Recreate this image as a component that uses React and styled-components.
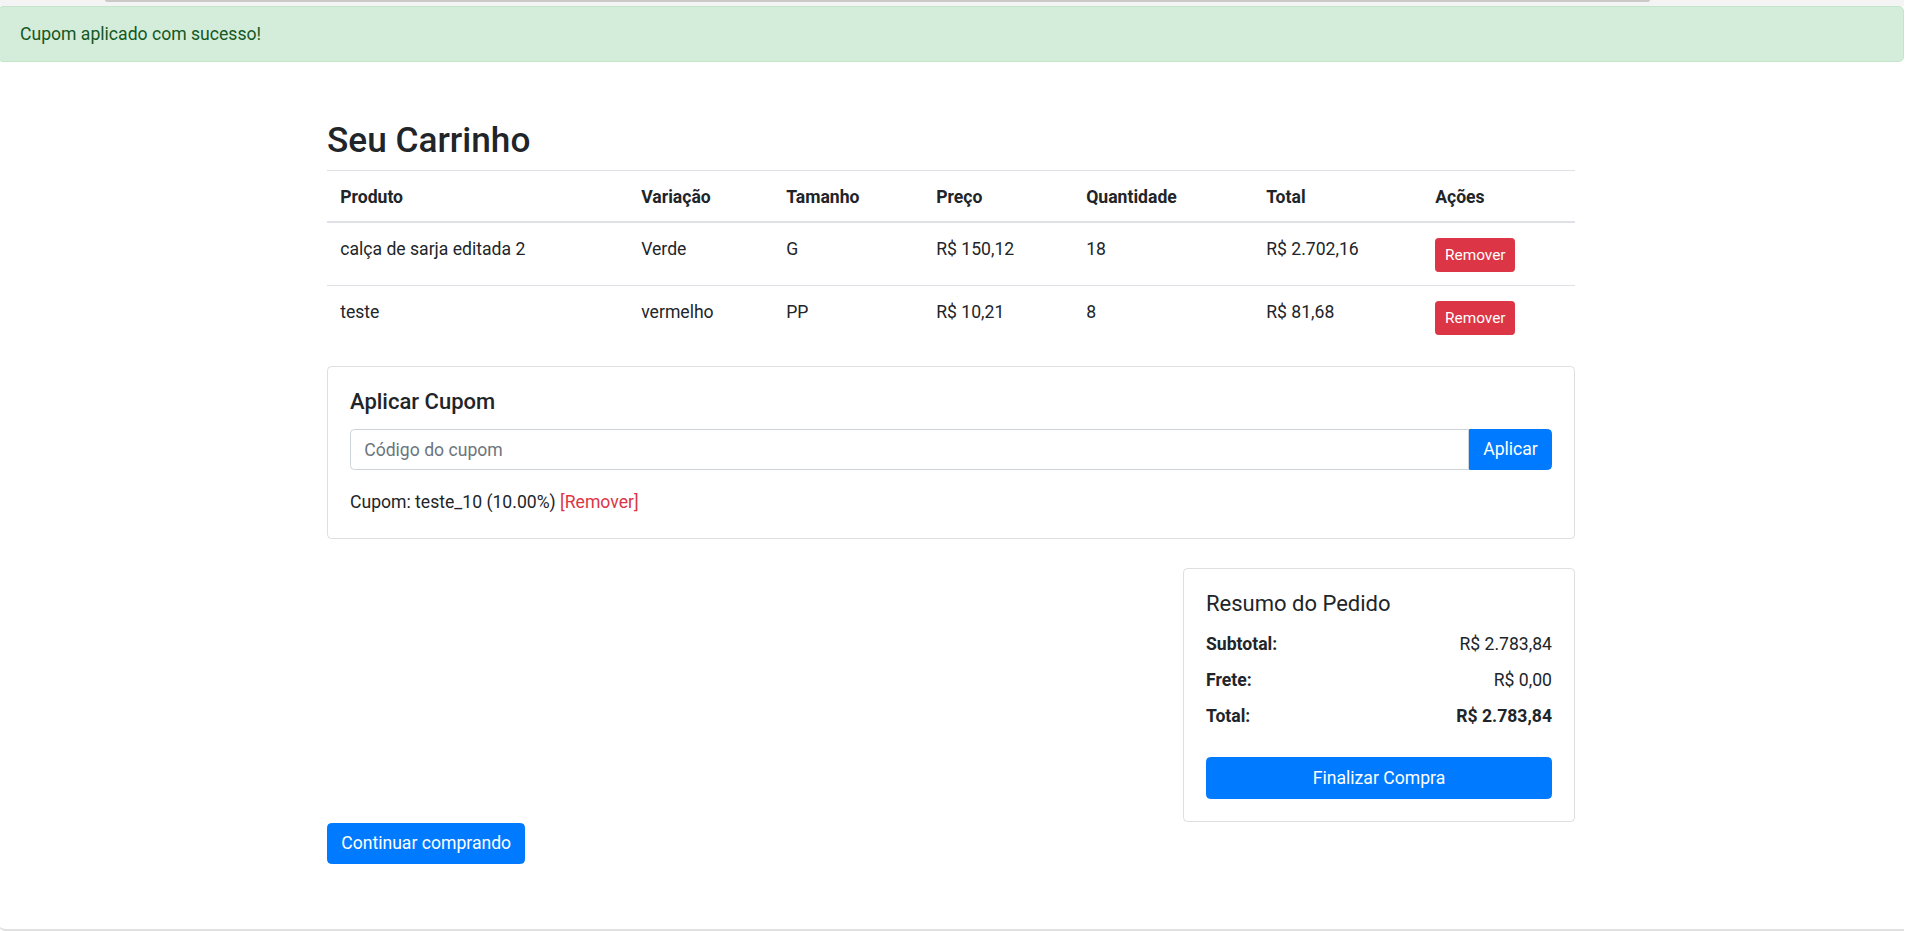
import React from "react";
import styled, { createGlobalStyle } from "styled-components";

const GlobalStyle = createGlobalStyle`
  * { box-sizing: border-box; }
  body {
    margin: 0;
    background: #ffffff;
    color: #212529;
    font-family: Roboto, "Noto Sans", "Liberation Sans", sans-serif;
    font-size: 17.6px;
    line-height: 1.5;
    overflow: hidden;
  }
`;

const Page = styled.div`
  margin: 0 2px 0 -2px;
  min-height: 931px;
  border-bottom: 2px solid #e0e0e0;
  border-bottom-left-radius: 8px;
`;

const TopStrip = styled.div`
  height: 6px;
  background: #f4f4f4;
  padding-left: 107px;
`;

const StripThumb = styled.div`
  width: 1545px;
  height: 2px;
  background: #c9c9c9;
  border-radius: 0 0 2px 2px;
`;

const Alert = styled.div`
  padding: 13.8px 21px;
  background: #d4edda;
  border: 1px solid #c3e6cb;
  border-radius: 5px;
  color: #155724;
  line-height: 26.4px;
`;

const Container = styled.main`
  width: 1248px;
  margin: 0 auto;
  padding-top: 56.5px;
  padding-bottom: 40px;
`;

const Title = styled.h2`
  margin: 0 0 8.8px;
  font-size: 35.2px;
  font-weight: 500;
  line-height: 1.2;
`;

const Table = styled.table`
  width: 100%;
  border-collapse: collapse;
  table-layout: fixed;
  margin-bottom: 17.6px;
`;

const Th = styled.th`
  width: ${({ w }) => w}px;
  padding: 13.2px 13.2px 10.8px;
  text-align: left;
  font-weight: 700;
  line-height: 26.4px;
  border-top: 1px solid #dee2e6;
  border-bottom: 2px solid #dee2e6;
`;

const Td = styled.td`
  padding: 13.2px;
  vertical-align: top;
  line-height: 26.4px;
  border-top: 1px solid #dee2e6;
`;

const SmallDanger = styled.button`
  display: inline-block;
  margin-top: 2px;
  padding: 4.4px 8.8px;
  font-family: inherit;
  font-size: 15.4px;
  line-height: 1.5;
  color: #fff;
  background: #dc3545;
  border: 1px solid #dc3545;
  border-radius: 3.3px;
  cursor: pointer;
`;

const Card = styled.section`
  border: 1px solid rgba(0, 0, 0, 0.125);
  border-radius: 4.4px;
  padding: 22px;
  width: ${({ w }) => (w ? `${w}px` : "auto")};
`;

const CardTitle = styled.h5`
  margin: 0 0 ${({ mb }) => mb}px;
  font-size: 22px;
  font-weight: ${({ weight }) => weight};
  line-height: 26.4px;
`;

const InputGroup = styled.div`
  display: flex;
  margin-bottom: 19px;
`;

const Input = styled.input`
  flex: 1;
  height: 41.8px;
  padding: 6.6px 13.2px;
  font-family: inherit;
  font-size: 17.6px;
  color: #495057;
  border: 1px solid #ced4da;
  border-radius: 4.4px 0 0 4.4px;
  outline: none;
  &::placeholder {
    color: #6c757d;
  }
`;

const PrimaryButton = styled.button`
  height: 41.8px;
  padding: 6.6px 13.2px;
  font-family: inherit;
  font-size: 17.6px;
  line-height: 26.4px;
  color: #fff;
  background: #007bff;
  border: 1px solid #007bff;
  border-radius: ${({ joined }) => (joined ? "0 4.4px 4.4px 0" : "4.4px")};
  width: ${({ block }) => (block ? "100%" : "auto")};
  margin-top: ${({ mt }) => mt || 0}px;
  cursor: pointer;
`;

const CouponInfo = styled.p`
  margin: 0;
  line-height: 26.4px;
`;

const RemoveLink = styled.a`
  color: #dc3545;
  text-decoration: none;
  cursor: pointer;
`;

const SummaryRow = styled.div`
  display: flex;
  justify-content: flex-end;
  margin-top: 29px;
`;

const SummaryLine = styled.div`
  display: flex;
  justify-content: space-between;
  line-height: 26.4px;
  margin-bottom: 9.6px;
  font-weight: ${({ strong }) => (strong ? 700 : 400)};
`;

const Label = styled.strong`
  font-weight: 700;
`;

const items = [
  { name: "calça de sarja editada 2", color: "Verde", size: "G", price: "R$ 150,12", qty: 18, total: "R$ 2.702,16" },
  { name: "teste", color: "vermelho", size: "PP", price: "R$ 10,21", qty: 8, total: "R$ 81,68" },
];

const columns = [
  ["Produto", 301],
  ["Variação", 145],
  ["Tamanho", 150],
  ["Preço", 150],
  ["Quantidade", 180],
  ["Total", 169],
  ["Ações", 153],
];

export default function App() {
  return (
    <Page>
      <GlobalStyle />
      <TopStrip>
        <StripThumb />
      </TopStrip>
      <Alert>Cupom aplicado com sucesso!</Alert>

      <Container>
        <Title>Seu Carrinho</Title>
        <Table>
          <thead>
            <tr>
              {columns.map(([label, w]) => (
                <Th key={label} w={w}>
                  {label}
                </Th>
              ))}
            </tr>
          </thead>
          <tbody>
            {items.map((item) => (
              <tr key={item.name}>
                <Td>{item.name}</Td>
                <Td>{item.color}</Td>
                <Td>{item.size}</Td>
                <Td>{item.price}</Td>
                <Td>{item.qty}</Td>
                <Td>{item.total}</Td>
                <Td>
                  <SmallDanger>Remover</SmallDanger>
                </Td>
              </tr>
            ))}
          </tbody>
        </Table>

        <Card>
          <CardTitle weight={500} mb={13.2}>
            Aplicar Cupom
          </CardTitle>
          <InputGroup>
            <Input placeholder="Código do cupom" />
            <PrimaryButton joined>Aplicar</PrimaryButton>
          </InputGroup>
          <CouponInfo>
            Cupom: teste_10 (10.00%) <RemoveLink>[Remover]</RemoveLink>
          </CouponInfo>
        </Card>

        <SummaryRow>
          <Card w={392}>
            <CardTitle weight={400} mb={14}>
              Resumo do Pedido
            </CardTitle>
            <SummaryLine>
              <Label>Subtotal:</Label>
              <span>R$ 2.783,84</span>
            </SummaryLine>
            <SummaryLine>
              <Label>Frete:</Label>
              <span>R$ 0,00</span>
            </SummaryLine>
            <SummaryLine strong>
              <Label>Total:</Label>
              <span>R$ 2.783,84</span>
            </SummaryLine>
            <PrimaryButton block mt={17.6}>
              Finalizar Compra
            </PrimaryButton>
          </Card>
        </SummaryRow>

        <PrimaryButton mt={1}>Continuar comprando</PrimaryButton>
      </Container>
    </Page>
  );
}
